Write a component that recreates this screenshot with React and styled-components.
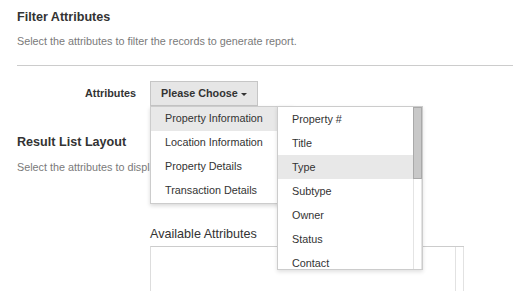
import React from "react";
import styled, { createGlobalStyle } from "styled-components";

const GlobalStyles = createGlobalStyle`
    *{
      margin: 0;
      padding: 0;
      box-sizing: border-box;
    }
    html, body {
      overflow: hidden;
      background: #fff;
    }
    body {
      font-family: "Liberation Sans", Arial, sans-serif;
      color: #333;
    }
`;

const mainItems = [
    "Property Information",
    "Location Information",
    "Property Details",
    "Transaction Details",
];

const subItems = ["Property #", "Title", "Type", "Subtype", "Owner", "Status", "Contact"];

function App() {
    return (
        <>
            <GlobalStyles />
            <Page>
                <SectionTitle>Filter Attributes</SectionTitle>
                <Hint>Select the attributes to filter the records to generate report.</Hint>
                <Divider />
                <FormRow>
                    <FieldLabel>Attributes</FieldLabel>
                    <Dropdown>
                        <ToggleButton>
                            Please Choose <Caret />
                        </ToggleButton>
                        <Menu>
                            {mainItems.map((item, i) => (
                                <MenuItem key={item} $active={i === 0}>
                                    {item}
                                </MenuItem>
                            ))}
                            <SubMenu>
                                <SubList>
                                    {subItems.map((item) => (
                                        <SubItem key={item} $active={item === "Type"}>
                                            {item}
                                        </SubItem>
                                    ))}
                                </SubList>
                                <ScrollTrack>
                                    <ScrollThumb />
                                </ScrollTrack>
                            </SubMenu>
                        </Menu>
                    </Dropdown>
                </FormRow>
                <SectionTitle $top={27}>Result List Layout</SectionTitle>
                <Hint $top={8}>Select the attributes to display in the result list.</Hint>
                <ListLabel>Available Attributes</ListLabel>
                <ListBox>
                    <ListArea />
                    <ListScroll />
                </ListBox>
            </Page>
        </>
    );
}

export default App;

const Page = styled.div`
    padding-left: 17px;
`;

const SectionTitle = styled.h3`
    margin-top: ${({ $top }) => ($top ? $top : 8)}px;
    font-size: 12.6px;
    line-height: 18px;
    font-weight: bold;
    color: #333;
`;

const Hint = styled.p`
    margin-top: ${({ $top }) => ($top ? $top : 7)}px;
    font-size: 10.8px;
    line-height: 16px;
    color: #7a7a7a;
    white-space: nowrap;
`;

const Divider = styled.div`
    margin-top: 16px;
    height: 1px;
    background: #cccccc;
`;

const FormRow = styled.div`
    display: flex;
    align-items: flex-start;
    margin-top: 15px;
    position: relative;
    z-index: 2;
`;

const FieldLabel = styled.label`
    width: 119px;
    padding-top: 5px;
    text-align: right;
    font-size: 10.8px;
    line-height: 15px;
    font-weight: bold;
    color: #333;
`;

const Dropdown = styled.div`
    position: relative;
    margin-left: 14px;
`;

const ToggleButton = styled.button`
    display: flex;
    align-items: center;
    height: 25px;
    padding: 4px 10px 4px 10px;
    border: 1px solid #c6c6c6;
    background: #e6e6e6;
    font-family: "Liberation Sans", Arial, sans-serif;
    font-size: 10.8px;
    line-height: 15px;
    font-weight: bold;
    color: #333;
    white-space: pre;
`;

const Caret = styled.span`
    display: inline-block;
    width: 0;
    height: 0;
    margin-top: 1px;
    border-top: 3.6px solid #333;
    border-left: 3.6px solid transparent;
    border-right: 3.6px solid transparent;
`;

const Menu = styled.div`
    position: absolute;
    top: 100%;
    left: 0;
    width: 144px;
    padding-top: 0;
    border: 1px solid #cccccc;
    background: #fff;
    box-shadow: 0 2px 4px rgba(0, 0, 0, 0.15);
`;

const MenuItem = styled.div`
    height: 24px;
    padding-left: 14px;
    font-size: 10.8px;
    line-height: 22px;
    color: #333;
    white-space: nowrap;
    background: ${({ $active }) => ($active ? "#e8e8e8" : "#fff")};
`;

const SubMenu = styled.div`
    position: absolute;
    top: -1px;
    left: 126px;
    width: 146px;
    height: 164px;
    display: flex;
    border: 1px solid #cccccc;
    background: #fff;
    box-shadow: 0 2px 4px rgba(0, 0, 0, 0.12);
`;

const SubList = styled.div`
    flex: 1;
    overflow: hidden;
`;

const SubItem = styled.div`
    height: 24px;
    padding-left: 14px;
    font-size: 10.8px;
    line-height: 24px;
    color: #333;
    white-space: nowrap;
    background: ${({ $active }) => ($active ? "#e8e8e8" : "#fff")};
`;

const ScrollTrack = styled.div`
    width: 9px;
    border-left: 1px solid #e4e4e4;
    border-right: 1px solid #e4e4e4;
    background: #fff;
`;

const ScrollThumb = styled.div`
    margin: 0 -1px;
    height: 72px;
    border: 1px solid #a9a9a9;
    background: #c8c8c8;
`;

const ListLabel = styled.div`
    margin-top: 50px;
    margin-left: 133px;
    font-size: 12.6px;
    line-height: 18px;
    color: #333;
`;

const ListBox = styled.div`
    display: flex;
    margin-top: 3px;
    margin-left: 133px;
    width: 314px;
    height: 50px;
    border-top: 1px solid #cccccc;
    border-left: 1px solid #dddddd;
`;

const ListArea = styled.div`
    flex: 1;
`;

const ListScroll = styled.div`
    width: 9px;
    border-left: 1px solid #e2e2e2;
    border-right: 1px solid #e2e2e2;
`;
